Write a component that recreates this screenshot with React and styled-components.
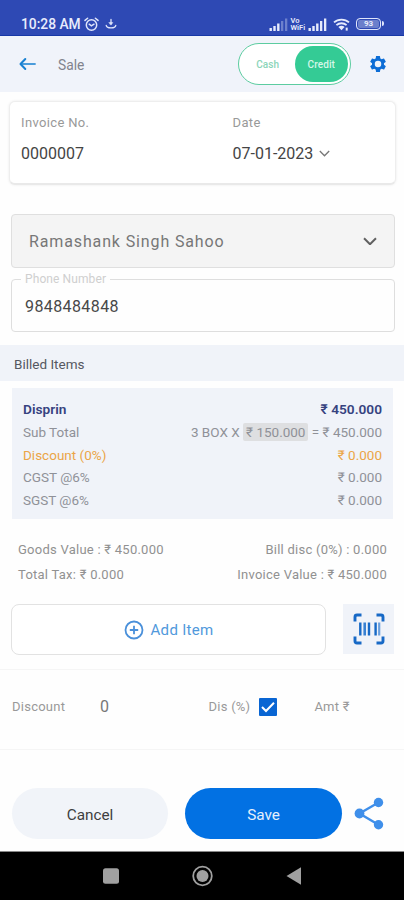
import React, { useState } from 'react';
import styled, { createGlobalStyle } from 'styled-components';


function App() {

  const [mode, setMode] = useState('credit');
  const [percent, setPercent] = useState(true);

  return (
    <>
      <GlobalStyle />
      <Screen>
        <StatusBar>
          <Time>10:28 AM</Time>
          <AlarmIcon />
          <DownloadIcon />
          <Signals>
            <SignalIcon weak />
            <VoWifi><span>Vo</span><span>WiFi</span></VoWifi>
            <SignalIcon />
            <WifiIcon />
            <Battery>93</Battery>
          </Signals>
        </StatusBar>

        <Header>
          <BackIcon />
          <Title>Sale</Title>
          <Toggle>
            <ToggleOption $active={mode === 'cash'} onClick={() => setMode('cash')}>Cash</ToggleOption>
            <ToggleOption $active={mode === 'credit'} onClick={() => setMode('credit')}>Credit</ToggleOption>
          </Toggle>
          <GearIcon />
        </Header>

        <InvoiceCard>
          <Field>
            <Label>Invoice No.</Label>
            <Value>0000007</Value>
          </Field>
          <Field>
            <Label>Date</Label>
            <Value>07-01-2023 <Chevron width={11} /></Value>
          </Field>
        </InvoiceCard>

        <CustomerSelect>
          <span>Ramashank Singh Sahoo</span>
          <Chevron width={14} bold />
        </CustomerSelect>

        <PhoneField>
          <legend>Phone Number</legend>
          <span>9848484848</span>
        </PhoneField>

        <SectionTitle>Billed Items</SectionTitle>

        <ItemCard>
          <ItemRow $color="#36427f" $bold>
            <span>Disprin</span>
            <span>₹ 450.000</span>
          </ItemRow>
          <ItemRow>
            <span>Sub Total</span>
            <span>3 BOX X <Rate>₹ 150.000</Rate> = ₹ 450.000</span>
          </ItemRow>
          <ItemRow $color="#eba547">
            <span>Discount (0%)</span>
            <span>₹ 0.000</span>
          </ItemRow>
          <ItemRow>
            <span>CGST @6%</span>
            <span>₹ 0.000</span>
          </ItemRow>
          <ItemRow>
            <span>SGST @6%</span>
            <span>₹ 0.000</span>
          </ItemRow>
        </ItemCard>

        <Totals>
          <TotalRow>
            <span>Goods Value : ₹ 450.000</span>
            <span>Bill disc (0%) : 0.000</span>
          </TotalRow>
          <TotalRow>
            <span>Total Tax: ₹ 0.000</span>
            <span>Invoice Value : ₹ 450.000</span>
          </TotalRow>
        </Totals>

        <AddRow>
          <AddButton>
            <PlusIcon />
            Add Item
          </AddButton>
          <ScanButton>
            <BarcodeIcon />
          </ScanButton>
        </AddRow>

        <DiscountRow>
          <DiscountLabel>Discount</DiscountLabel>
          <DiscountValue>0</DiscountValue>
          <span>Dis (%)</span>
          <Checkbox onClick={() => setPercent(!percent)}>
            {percent && <CheckIcon />}
          </Checkbox>
          <span>Amt ₹</span>
        </DiscountRow>

        <Actions>
          <CancelButton>Cancel</CancelButton>
          <SaveButton>Save</SaveButton>
          <ShareIcon />
        </Actions>

        <NavBar>
          <NavIcons />
        </NavBar>
      </Screen>
    </>
  )
}

export default App;

const AlarmIcon = () => (
  <svg width="15" height="15" viewBox="0 0 15 15" fill="none" stroke="#dfe5fb" strokeWidth="1.5" strokeLinecap="round">
    <circle cx="7.5" cy="8" r="5.2" />
    <path d="M1 3.4L3.6 1.2M14 3.4L11.4 1.2M5.2 7.2L7.4 8.8L10 7.2" />
  </svg>
)

const DownloadIcon = () => (
  <svg width="12" height="12" viewBox="0 0 12 12" fill="none" stroke="#dfe5fb" strokeWidth="1.3" strokeLinecap="round">
    <path d="M6 1.5V6M1.2 7.4C1.6 10.8 10.4 10.8 10.8 7.4" />
    <path d="M4.2 4.6H7.8L6 6.8Z" fill="#dfe5fb" strokeWidth="0.6" />
  </svg>
)

const SignalIcon = ({ weak }) => (
  <svg width="19" height="13" viewBox="0 0 19 13" fill="#e6ebfc">
    <rect x="0.5" y="10" width="2.4" height="3" />
    <rect x="4.3" y="8" width="2.4" height="5" />
    <rect x="8.1" y="5.5" width="2.4" height="7.5" />
    <rect x="12" y="3" width="2.3" height="10" opacity={weak ? 0.35 : 1} />
    <rect x="16" y="0.5" width="2.3" height="12.5" opacity={weak ? 0.35 : 1} />
  </svg>
)

const WifiIcon = () => (
  <svg width="17" height="13" viewBox="0 0 17 13" fill="none" stroke="#e6ebfc" strokeWidth="1.8">
    <path d="M1 4.4C5 0.6 12 0.6 16 4.4M3.4 7.2C6.2 4.6 10.8 4.6 13.6 7.2" />
    <path d="M5.4 9C7.2 7.4 9.8 7.4 11.6 9L8.5 12.2Z" fill="#e6ebfc" stroke="none" />
    <path d="M13.7 9.6V12.6" strokeWidth="2" />
  </svg>
)

const BackIcon = () => (
  <svg width="17" height="14" viewBox="0 0 17 14" fill="none" strokeLinecap="round" strokeLinejoin="round">
    <path d="M2 7H16" stroke="#4b9cdb" strokeWidth="1.8" />
    <path d="M6.3 2L1.5 7L6.3 12" stroke="#1981d2" strokeWidth="2" />
  </svg>
)

const GearIcon = () => (
  <svg width="20" height="20" viewBox="0 0 24 24" fill="#0d6dd6">
    <path d="M19.14 12.94c.04-.3.06-.61.06-.94 0-.32-.02-.64-.07-.94l2.03-1.58a.49.49 0 0 0 .12-.61l-1.92-3.32a.488.488 0 0 0-.59-.22l-2.39.96c-.5-.38-1.03-.7-1.62-.94l-.36-2.54a.484.484 0 0 0-.48-.41h-3.84c-.24 0-.43.17-.47.41l-.36 2.54c-.59.24-1.13.57-1.62.94l-2.39-.96c-.22-.08-.47 0-.59.22L2.74 8.87c-.12.21-.08.47.12.61l2.03 1.58c-.05.3-.09.63-.09.94s.02.64.07.94l-2.03 1.58a.49.49 0 0 0-.12.61l1.92 3.32c.12.22.37.29.59.22l2.39-.96c.5.38 1.03.7 1.62.94l.36 2.54c.05.24.24.41.48.41h3.84c.24 0 .44-.17.47-.41l.36-2.54c.59-.24 1.13-.56 1.62-.94l2.39.96c.22.08.47 0 .59-.22l1.92-3.32c.12-.22.07-.47-.12-.61l-2.01-1.58zM12 15.9a3.9 3.9 0 1 1 0-7.8 3.9 3.9 0 0 1 0 7.8z" />
  </svg>
)

const Chevron = ({ width, bold }) => (
  <svg width={width} height={width * 0.64} viewBox="0 0 14 9" fill="none" stroke={bold ? '#606060' : '#777'} strokeWidth={bold ? 2 : 1.7}>
    <path d="M1 1.3L7 7.3L13 1.3" />
  </svg>
)

const PlusIcon = () => (
  <svg width="20" height="20" viewBox="0 0 20 20" fill="none" stroke="#4a90da">
    <circle cx="10" cy="10" r="8.5" strokeWidth="1.8" />
    <path d="M10 5.8V14.2M5.8 10H14.2" strokeWidth="1.8" />
  </svg>
)

const BarcodeIcon = () => (
  <svg width="32" height="32" viewBox="0 0 32 32" fill="none" stroke="#1769c6">
    <path d="M2 8.5V4Q2 2 4 2H8.5M23.5 2H28Q30 2 30 4V8.5M30 23.5V28Q30 30 28 30H23.5M8.5 30H4Q2 30 2 28V23.5" strokeWidth="2.9" />
    <path d="M7.3 9.5V22.5M16 9.5V22.5M22.6 9.5V22.5" strokeWidth="2.4" />
    <path d="M11.7 9.5V22.5" strokeWidth="2.6" stroke="#3981d2" />
    <path d="M26.2 9.5V22.5" strokeWidth="2.2" stroke="#6ba0dd" />
  </svg>
)

const CheckIcon = () => (
  <svg width="14" height="12" viewBox="0 0 14 12" fill="none" stroke="#fff" strokeWidth="2">
    <path d="M1 6L5 10L13 1.8" />
  </svg>
)

const ShareIcon = () => (
  <svg width="30" height="33" viewBox="0 0 30 33" fill="#3f8fea" stroke="#3f8fea">
    <path d="M24.5 5.5L5.5 16.5L24.5 27.8" fill="none" strokeWidth="2.4" />
    <circle cx="24.5" cy="5.5" r="4.7" stroke="none" />
    <circle cx="5.5" cy="16.5" r="4.9" stroke="none" />
    <circle cx="24.5" cy="27.8" r="4.7" stroke="none" />
  </svg>
)

const NavIcons = () => (
  <svg width="200" height="22" viewBox="0 0 200 22" fill="#a0a0a0">
    <rect x="1" y="3.3" width="16" height="15.5" rx="2.5" />
    <circle cx="100.5" cy="11" r="9.3" fill="none" stroke="#a0a0a0" strokeWidth="1.8" />
    <circle cx="100.5" cy="11" r="6" />
    <path d="M184.5 11L199 2.2V19.8Z" />
  </svg>
)

const GlobalStyle = createGlobalStyle`
  * {
    box-sizing: border-box;
  }
  body {
    margin: 0;
    background: #fff;
    font-family: Roboto, "Noto Sans", sans-serif;
  }
  svg {
    flex-shrink: 0;
  }
  button {
    border: none;
    padding: 0;
    font-family: inherit;
    cursor: pointer;
  }
`
const Screen = styled.div`
  display: flex;
  flex-direction: column;
  width: 404px;
  height: 900px;
  overflow: hidden;
  background: #fefefe;
  white-space: nowrap;
`
const StatusBar = styled.div`
  display: flex;
  align-items: center;
  height: 36px;
  padding: 13px 20px 0 21px;
  background: #2e49b4;
  border-bottom: 1px solid #1738a6;
  color: #e8ecfc;
  > svg + svg {
    margin-left: 6px;
  }
`
const Time = styled.span`
  width: 63px;
  font-size: 13.8px;
  font-weight: 500;
`
const Signals = styled.div`
  display: flex;
  align-items: center;
  margin-left: auto;
  gap: 2.5px;
  > svg:nth-of-type(3) {
    margin-left: 3px;
  }
`
const VoWifi = styled.div`
  display: flex;
  flex-direction: column;
  width: 15px;
  font-size: 7.5px;
  font-weight: 600;
  line-height: 7.5px;
`
const Battery = styled.div`
  position: relative;
  width: 25px;
  height: 12px;
  margin: 0 3px 0 4px;
  border: 1.5px solid #dfe5fb;
  border-radius: 4px;
  font-size: 8px;
  font-weight: 700;
  line-height: 9px;
  text-align: center;
  box-shadow: inset 0 0 0 1px #2e49b4;
  background: #6b7fcb;
  &::after {
    content: '';
    position: absolute;
    right: -4px;
    top: 2px;
    width: 2px;
    height: 5px;
    border-radius: 0 2px 2px 0;
    background: #dfe5fb;
  }
`
const Header = styled.div`
  display: flex;
  align-items: center;
  height: 56px;
  padding: 0 16px 0 19px;
  background: #f0f3fa;
`
const Title = styled.div`
  flex: 1;
  margin-left: 22px;
  padding-top: 1px;
  font-size: 13.8px;
  color: #81838d;
`
const Toggle = styled.div`
  display: flex;
  width: 113px;
  height: 42px;
  margin-right: 17px;
  padding: 2px;
  border: 1px solid #5ccca0;
  border-radius: 21px;
  background: #fff;
`
const ToggleOption = styled.button`
  flex: 1;
  border-radius: 18px;
  font-size: 10px;
  font-weight: 500;
  letter-spacing: 0.1px;
  color: ${props => props.$active ? '#d5f7e8' : '#8bd5b9'};
  background: ${props => props.$active ? '#34cb95' : 'transparent'};
`
const InvoiceCard = styled.div`
  display: flex;
  height: 84px;
  margin: 9px 8px 0 9px;
  padding: 12px 11px;
  border: 1px solid #eee;
  border-bottom: 2px solid #e9e9e9;
  border-radius: 6px;
  background: #fff;
  box-shadow: 0 0 3px rgba(0, 0, 0, .08);
`
const Field = styled.div`
  &:first-child {
    width: 211.5px;
  }
`
const Label = styled.div`
  height: 17px;
  font-size: 13px;
  line-height: 18px;
  letter-spacing: 0.35px;
  color: #999;
`
const Value = styled.div`
  display: flex;
  align-items: center;
  margin-top: 13px;
  gap: 6px;
  font-size: 16px;
  line-height: 20px;
  color: #444;
`
const CustomerSelect = styled.div`
  display: flex;
  align-items: center;
  justify-content: space-between;
  height: 54px;
  margin: 29px 9px 0 11px;
  padding: 0 17px;
  border: 1px solid #dfdfdf;
  border-radius: 4px;
  background: #f4f4f4;
  font-size: 16px;
  letter-spacing: 0.87px;
  color: #777;
`
const PhoneField = styled.fieldset`
  height: 59px;
  margin: 5px 9px 0 11px;
  padding: 0 13px;
  border: 1px solid #dedede;
  border-radius: 4px;
  font-size: 16px;
  letter-spacing: 0.4px;
  line-height: 36px;
  color: #484848;
  legend {
    height: 12px;
    margin-left: -4px;
    padding: 0 4px;
    font-size: 12px;
    line-height: 12px;
    letter-spacing: 0.1px;
    color: #cfcfcf;
  }
  span {
    display: block;
    padding-top: 4px;
  }
`
const SectionTitle = styled.div`
  height: 36px;
  margin-top: 13px;
  padding: 1px 14px 0;
  background: #f0f3f9;
  font-size: 13.5px;
  line-height: 36px;
  color: #555861;
`
const ItemCard = styled.div`
  height: 131px;
  margin: 7px 11px 0 12px;
  padding: 10px 11px 0;
  background: #f0f3f9;
`
const ItemRow = styled.div`
  display: flex;
  justify-content: space-between;
  height: 22.8px;
  font-size: ${props => props.$bold ? '13.7px' : '13.5px'};
  font-weight: ${props => props.$bold ? 600 : 400};
  line-height: 22.8px;
  color: ${props => props.$color || '#8f9198'};
`
const Rate = styled.span`
  padding: 1px 3px;
  border-radius: 2px;
  background: #dedfe1;
`
const Totals = styled.div`
  height: 85px;
  padding: 18px 17px 0 18px;
`
const TotalRow = styled.div`
  display: flex;
  justify-content: space-between;
  height: 25px;
  font-size: 13px;
  line-height: 26px;
  letter-spacing: 0.25px;
  color: #919191;
`
const AddRow = styled.div`
  display: flex;
  height: 66px;
  padding: 0 10px 0 11px;
  justify-content: space-between;
  border-bottom: 1px solid #f5f5f5;
`
const AddButton = styled.button`
  display: flex;
  align-items: center;
  justify-content: center;
  width: 315px;
  height: 51px;
  gap: 7px;
  border: 1px solid #e2e2e2;
  border-radius: 8px;
  background: #fff;
  font-size: 15px;
  letter-spacing: 0.3px;
  color: #5199dc;
`
const ScanButton = styled.button`
  display: flex;
  align-items: center;
  justify-content: center;
  width: 51px;
  height: 50px;
  background: #f0f3f9;
`
const DiscountRow = styled.div`
  display: flex;
  align-items: center;
  height: 80px;
  padding: 0 12px 6px;
  border-bottom: 1px solid #f5f5f5;
  font-size: 13px;
  letter-spacing: 0.25px;
  color: #999;
`
const DiscountLabel = styled.span`
  width: 88px;
`
const DiscountValue = styled.span`
  width: 108.5px;
  font-size: 16px;
  color: #777;
`
const Checkbox = styled.button`
  display: flex;
  align-items: center;
  justify-content: center;
  width: 18px;
  height: 18px;
  margin: 0 37px 0 9px;
  border-radius: 1px;
  background: #0965d3;
`
const Actions = styled.div`
  display: flex;
  align-items: center;
  height: 51px;
  margin-top: 38px;
  padding-left: 12px;
`
const CancelButton = styled.button`
  width: 156px;
  height: 51px;
  margin-right: 17px;
  padding-top: 2px;
  border-radius: 26px;
  background: #f1f4f9;
  font-size: 15.3px;
  color: #3e3e40;
`
const SaveButton = styled(CancelButton)`
  width: 157px;
  margin-right: 12px;
  background: #0271e3;
  color: #e4f0fd;
`
const NavBar = styled.div`
  display: flex;
  justify-content: center;
  height: 49px;
  margin-top: auto;
  padding: 13px 0 0 0;
  border-top: 1px solid #888;
  background: #000;
`
